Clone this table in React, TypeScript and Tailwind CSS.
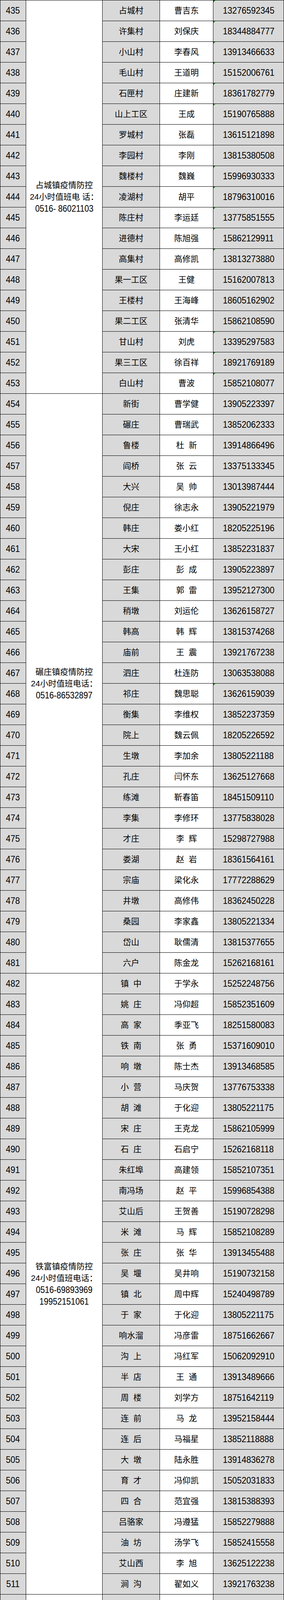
import React from "react";

type Row = [number, string, string, string];

const rows: Row[] = [
  [435, "占城村", "曹吉东", "13276592345"],
  [436, "许集村", "刘保庆", "18344884777"],
  [437, "小山村", "李春风", "13913466633"],
  [438, "毛山村", "王道明", "15152006761"],
  [439, "石匣村", "庄建新", "18361782779"],
  [440, "山上工区", "王成", "15190765888"],
  [441, "罗城村", "张磊", "13615121898"],
  [442, "李园村", "李刚", "13815380508"],
  [443, "魏楼村", "魏巍", "15996930333"],
  [444, "凌湖村", "胡平", "18796310016"],
  [445, "陈庄村", "李运廷", "13775851555"],
  [446, "进德村", "陈旭强", "15862129911"],
  [447, "高集村", "高修凯", "13813273880"],
  [448, "果一工区", "王健", "15162007813"],
  [449, "王楼村", "王海峰", "18605162902"],
  [450, "果二工区", "张清华", "15862108590"],
  [451, "甘山村", "刘虎", "13395297583"],
  [452, "果三工区", "徐百祥", "18921769189"],
  [453, "白山村", "曹波", "15852108077"],
  [454, "新街", "曹学健", "13905223397"],
  [455, "碾庄", "曹瑞武", "13852062333"],
  [456, "鲁楼", "杜  新", "13914866496"],
  [457, "阎桥", "张  云", "13375133345"],
  [458, "大兴", "吴  帅", "13013987444"],
  [459, "倪庄", "徐志永", "13905221979"],
  [460, "韩庄", "娄小红", "18205225196"],
  [461, "大宋", "王小红", "13852231837"],
  [462, "彭庄", "彭  成", "13905223897"],
  [463, "王集", "郭  雷", "13952127300"],
  [464, "稍墩", "刘运伦", "13626158727"],
  [465, "韩高", "韩  辉", "13815374268"],
  [466, "庙前", "王  震", "13921767238"],
  [467, "泗庄", "杜连防", "13063538088"],
  [468, "祁庄", "魏思聪", "13626159039"],
  [469, "衡集", "李维权", "13852237359"],
  [470, "院上", "魏云佩", "18205226592"],
  [471, "生墩", "李加余", "13805221188"],
  [472, "孔庄", "闫怀东", "13625127668"],
  [473, "练滩", "靳春笛", "18451509110"],
  [474, "李集", "李修环", "13775838028"],
  [475, "才庄", "李  辉", "15298727988"],
  [476, "娄湖", "赵  岩", "18361564161"],
  [477, "宗庙", "梁化永", "17772288629"],
  [478, "井墩", "高修伟", "18362450228"],
  [479, "桑园", "李家鑫", "13805221334"],
  [480, "岱山", "耿儒清", "13815377655"],
  [481, "六户", "陈金龙", "15262168161"],
  [482, "镇  中", "于学永", "15252248756"],
  [483, "姚  庄", "冯仰超", "15852351609"],
  [484, "高  家", "季亚飞", "18251580083"],
  [485, "铁  南", "张  勇", "15371609010"],
  [486, "响  墩", "陈士杰", "13913468585"],
  [487, "小  营", "马庆贺", "13776753338"],
  [488, "胡  滩", "于化迎", "13805221175"],
  [489, "宋  庄", "王克龙", "15862105999"],
  [490, "石  庄", "石启宁", "15262168118"],
  [491, "朱红埠", "高建领", "15852107351"],
  [492, "南冯场", "赵  平", "15996854388"],
  [493, "艾山后", "王贺善", "15190728298"],
  [494, "米  滩", "马  辉", "15852108289"],
  [495, "张  庄", "张  华", "13913455488"],
  [496, "吴  堰", "吴井响", "15190732158"],
  [497, "镇  北", "周中辉", "15240498789"],
  [498, "于  家", "于化迎", "13805221175"],
  [499, "响水溜", "冯彦雷", "18751662667"],
  [500, "沟  上", "冯红军", "15062092910"],
  [501, "半  店", "王  通", "13913489666"],
  [502, "周  楼", "刘学方", "18751642119"],
  [503, "连  前", "马  龙", "13952158444"],
  [504, "连  后", "马福星", "13852118888"],
  [505, "大  墩", "陆永胜", "13914836278"],
  [506, "育  才", "冯仰凯", "15052031833"],
  [507, "四  合", "范宜强", "13815388393"],
  [508, "吕骆家", "冯遵猛", "15852279888"],
  [509, "油  坊", "汤学飞", "15852415558"],
  [510, "艾山西", "李  旭", "13625122238"],
  [511, "涧  沟", "翟如义", "13921763238"],
  [512, "四户村", "王昌国", "15152008115"],
  [513, "王庄村", "董中勇", "18796438688"],
  [514, "夏墩村", "王鹏业", "18751590789"],
  [515, "赵家村", "陆永成", "13914839558"],
  [516, "找埠村", "汤元尚", "15162015088"],
  [517, "顾桥村", "王士武", "15152018222"],
  [518, "杜庄村", "王凯先", "18762211533"],
  [519, "高板桥村", "张传科", "15252227183"],
  [520, "栗家村", "王学胜", "15152005678"],
  [521, "道口村", "王占永", "13921788788"],
  [522, "竹园村", "李大上", "15952561111"],
  [523, "白马寺村", "李  肖", "13952271999"],
  [524, "凤凰庄村", "臧保洲", "13852068685"],
  [525, "董塘村", "刘宝山", "15996851777"],
  [526, "桃园村", "李  威", "13585364777"],
  [527, "石羊村", "陈玉国", "13952133503"],
  [528, "岗子村", "李辉亮", "15062045638"],
  [529, "沟涯村", "孟现恒", "15052034939"],
];

// merged cells of the second column
const towns: Record<number, { span: string; lines: string[] }> = {
  435: { span: "row-span-19", lines: ["占城镇疫情防控", "24小时值班电 话：", "0516- 86021103"] },
  454: { span: "row-span-28", lines: ["碾庄镇疫情防控", "24小时值班电话：", "0516-86532897"] },
  482: { span: "row-span-30", lines: ["铁富镇疫情防控", "24小时值班电话：", "0516-69893969", "19952151061"] },
  512: { span: "row-span-18", lines: ["四户镇疫情防控", "24小时值班电话：", "0516-86491104", "18151575913"] },
};

// phone cells carrying Excel's little green "number as text" flag
const flagged = new Set([435, 436, 437, 438, 439, 440, 443, 444, 445, 446, 447, 451, 452, 453, 468]);

const Digits = ({ children }: { children: string }) => (
  <span className="inline-block scale-x-90 text-[24px] leading-[24px] whitespace-pre">{children}</span>
);

const App = () => {
  return (
    <div className="w-[728px] h-[5037px] overflow-hidden bg-white text-black leading-none font-['Liberation_Sans','Noto_Sans_CJK_SC',sans-serif]">
      <div className="grid grid-cols-[65px_195px_146px_136px_180px] grid-rows-[repeat(95,52px)] gap-px bg-black border-t border-l border-r border-b-2 border-black">
        {rows.map(([no, village, name, phone]) => {
          const town = towns[no];
          return (
            <React.Fragment key={no}>
              <div className="h-[52px] overflow-hidden bg-[#d9d9d9] flex items-center justify-center">
                <Digits>{String(no)}</Digits>
              </div>
              {town && (
                <div className={`${town.span} bg-white flex flex-col items-center justify-center`}>
                  {town.lines.map((line) =>
                    /^[\d\- ]+$/.test(line) ? (
                      <span key={line} className="inline-block scale-x-90 text-[23px] leading-[30px] whitespace-pre">{line}</span>
                    ) : (
                      <span key={line} className="text-[21px] leading-[30px] whitespace-pre">{line}</span>
                    )
                  )}
                </div>
              )}
              <div className="h-[52px] overflow-hidden bg-[#d9d9d9] flex items-center justify-center text-[21px] leading-[24px] whitespace-pre">{village}</div>
              <div className="h-[52px] overflow-hidden bg-white flex items-center justify-center text-[21px] leading-[24px] whitespace-pre">{name}</div>
              <div className="relative h-[52px] overflow-hidden bg-[#d9d9d9] flex items-center justify-center">
                {flagged.has(no) && (
                  <span className="absolute left-0 top-0 w-0 h-0 border-t-[5px] border-r-[5px] border-t-[#0a8a0a] border-r-transparent" />
                )}
                <Digits>{phone}</Digits>
              </div>
            </React.Fragment>
          );
        })}
      </div>
    </div>
  );
};

export default App;
